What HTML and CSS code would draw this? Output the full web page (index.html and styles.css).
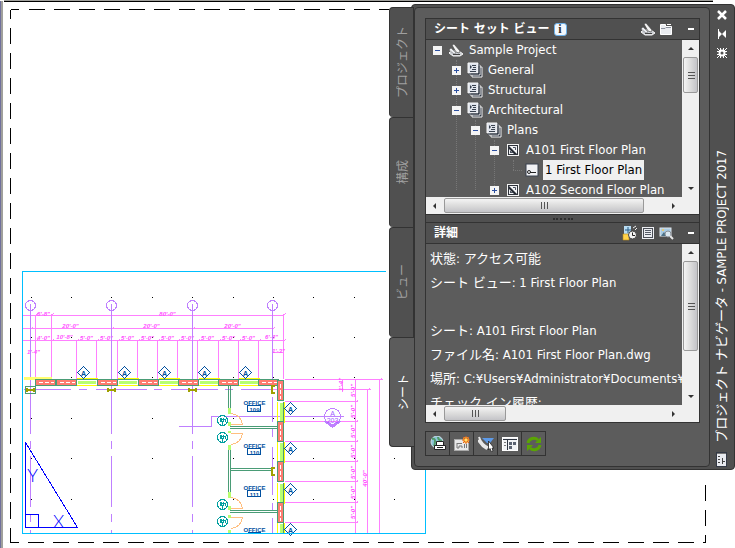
FILE: index.html
```
<!DOCTYPE html>
<html lang="ja">
<head>
    <meta charset="UTF-8">
    <meta name="viewport" content="width=device-width, initial-scale=1.0">
    <title>プロジェクト ナビゲータ - SAMPLE PROJECT 2017</title>
    <link rel="stylesheet" href="styles.css">
</head>
<body>
    <!-- Shared icons -->
    <svg class="icon-defs" aria-hidden="true">
        <symbol id="icon-project" viewBox="0 0 16 16">
            <path d="M3 9 H11 L15 12 L12 14 H5 L1 11 Z" fill="#c9ccd2" stroke="#f5f5f5"/>
            <path d="M4 3 L6 2 L12 9 L11 11 L8 10 Z" fill="#f4f4f4" stroke="#3b3b3b" stroke-width=".6"/>
            <path d="M1 8 L3 6 L8 11 L6 12 Z" fill="#eceef2" stroke="#555" stroke-width=".5"/>
            <path d="M5 12.500 H12" stroke="#444"/>
        </symbol>
        <symbol id="icon-sheets" viewBox="0 0 16 16">
            <path d="M5 5 H15 V15 H5 Z" fill="#2f3644" stroke="#f2f2f2"/>
            <path d="M3 3 H13 V13 H3 Z" fill="#2f3644" stroke="#f2f2f2"/>
            <path d="M1 1 H11 V11 H1 Z" fill="#dfe3ec" stroke="#f8f8f8"/>
            <path d="M1.500 12 H12 V1.500" fill="none" stroke="#2f3644"/>
            <path d="M5 3.500 H9 M6 5.500 H9 M5 7.500 H9 M3 9.500 H9" stroke="#39424f"/>
            <path d="M3 3 L5 5 L3 7 Z" fill="#39424f"/>
        </symbol>
        <symbol id="icon-drawing" viewBox="0 0 16 16">
            <rect x="2.500" y="2.500" width="11" height="11" fill="#f4f5f7" stroke="#f2f2f2"/>
            <rect x="3.500" y="3.500" width="9" height="9" fill="#f4f5f7" stroke="#30343c"/>
            <path d="M4 4 L12 12 H9 L4 7 Z" fill="#252a33"/>
            <path d="M5.500 11 V9 M8 5.500 H10.500 V8 M5 10.500 H8" stroke="#4a515e" fill="none"/>
        </symbol>
        <symbol id="icon-view" viewBox="0 0 16 16">
            <rect x="2" y="2" width="12" height="12" fill="#f0f1f4" stroke="#39414e"/>
            <circle cx="5" cy="10" r="1.500" fill="none" stroke="#222"/>
            <path d="M6 10.500 H12" stroke="#222"/>
        </symbol>
        <symbol id="icon-grip" viewBox="0 0 8 8">
            <path d="M1.500 0 V7 M4.500 0 V7 M7.500 0 V7" stroke="#555"/>
        </symbol>
    </svg>

    <main class="workspace">
        <!-- Floor plan in paper space -->
        <svg class="drawing" viewBox="0 0 735 548" preserveAspectRatio="xMinYMin meet" role="img" aria-label="First Floor Plan">
            <defs>
                <g id="tag">
                    <path d="M0 -6 L6 0 L0 6 L-6 0 Z" fill="#fff"/>
                    <text class="tag-text" y="3">A</text>
                </g>
                <g id="beam">
                    <path d="M-4 -2 V2 M-3 -2 V2 M3 -2 V2 M4 -2 V2 M-3 0 H3 M-3 1 H3"/>
                </g>
                <g id="wall">
                    <rect width="20" height="6" fill="#ff7b70" stroke="#4a9c76"/>
                    <path d="M3 3 H18" stroke="#fff" stroke-dasharray="4 2"/>
                </g>
                <g id="window">
                    <rect x="1" y="1" width="18" height="3" fill="#b8ff70"/>
                    <path d="M0 -1 H21 M0 6 H20" stroke="#ffff00"/>
                    <path d="M0 0 H20" stroke="#4a9c76"/>
                </g>
                <g id="door-tag">
                    <circle r="5" fill="#fff"/>
                    <path d="M-2 -3 V1 M-1 -3 V1 M1 -3 V1 M0 0 V4 M3 -2 V1 M-3 -1 H2"/>
                </g>
            </defs>

            <g transform="translate(.5 .5)">
                <path class="edge-dark" d="M0 0 V548"/>
                <path class="edge" d="M1 0 V548 M2 0 V548 M3 0 H712"/>
                <path class="black" d="M3 1 H712"/>
                <path class="black" d="M10 9 H18 M10 9 V18 M10 542 H18 M10 534 V542"/>
                <path class="black dash" d="M28 9 H388 M27 542 H705"/>
                <path class="black dash" d="M10 27 V534"/>
                <path class="black dash" d="M705 484 V542"/>

                <g class="dots">
                    <path d="M30 297 H360"/>
                    <path d="M30 337 H360"/>
                    <path d="M30 377 H360"/>
                    <path d="M30 418 H360"/>
                    <path d="M30 458 H400"/>
                    <path d="M30 499 H400"/>
                </g>

                <!-- Dimensions -->
                <g class="dim">
                    <path d="M22 315 H283 M22 328 H272 M22 340 H283 M272 352 H283"/>
                    <path d="M35 315 V380 M51 313 V376 M30 328 V390 M283 313 V378"/>
                    <path d="M76 340 V378 M96 340 V378 M117 340 V378 M137 340 V378 M157 340 V378 M177 340 V378 M197 340 V378 M218 340 V378 M238 340 V378 M258 340 V378"/>
                    <path d="M284 379 H382 M272 389 H370 M284 401 H357 M284 421 H357 M284 441 H357 M284 461 H357 M284 481 H357 M284 502 H357 M284 522 H357"/>
                    <path d="M355 378 V533 M367 388 V533 M379 378 V533 M342 378 V391"/>
                    <path class="ticks" d="M34 316 l3 -3 M50 316 l3 -3 M282 316 l3 -3 M29 330 l3 -3 M110 330 l3 -3 M191 330 l3 -3 M271 330 l3 -3 M34 342 l3 -3 M50 342 l3 -3 M75 342 l3 -3 M95 342 l3 -3 M116 342 l3 -3 M136 342 l3 -3 M156 342 l3 -3 M176 342 l3 -3 M196 342 l3 -3 M217 342 l3 -3 M237 342 l3 -3 M257 342 l3 -3 M282 342 l3 -3 M354 403 l3 -3 M354 423 l3 -3 M354 443 l3 -3 M354 463 l3 -3 M354 483 l3 -3 M354 504 l3 -3 M354 524 l3 -3 M366 391 l3 -3 M378 381 l3 -3"/>
                </g>
                <g class="dim-text">
                    <text x="43" y="315">6'-8"</text>
                    <text x="167" y="315">80'-0"</text>
                    <text x="70" y="327">20'-0"</text>
                    <text x="151" y="327">20'-0"</text>
                    <text x="232" y="327">20'-0"</text>
                    <text x="43" y="339">4'-0"</text>
                    <text x="64" y="338">10'-8"</text>
                    <text x="86" y="339">5'-0"</text>
                    <text x="106" y="339">5'-0"</text>
                    <text x="127" y="339">5'-0"</text>
                    <text x="147" y="339">5'-0"</text>
                    <text x="167" y="339">5'-0"</text>
                    <text x="187" y="339">5'-0"</text>
                    <text x="207" y="339">5'-0"</text>
                    <text x="228" y="339">5'-0"</text>
                    <text x="248" y="339">5'-0"</text>
                    <text x="271" y="338">6'-4"</text>
                    <text x="33" y="353">1'-4"</text>
                    <text x="278" y="352">1'-3"</text>
                    <text transform="translate(342 384) rotate(-90)">1'-4"</text>
                    <text transform="translate(354 390) rotate(-90)">5'-0"</text>
                    <text transform="translate(354 411) rotate(-90)">5'-0"</text>
                    <text transform="translate(354 431) rotate(-90)">5'-0"</text>
                    <text transform="translate(354 451) rotate(-90)">5'-0"</text>
                    <text transform="translate(354 472) rotate(-90)">5'-0"</text>
                    <text transform="translate(354 492) rotate(-90)">5'-0"</text>
                    <text transform="translate(354 512) rotate(-90)">5'-0"</text>
                    <text transform="translate(366 478) rotate(-90)">40'-0"</text>
                </g>

                <!-- Column grid -->
                <g class="grid-line">
                    <circle cx="30" cy="305" r="5"/>
                    <circle cx="111" cy="305" r="5"/>
                    <circle cx="192" cy="305" r="5"/>
                    <circle cx="272" cy="305" r="5"/>
                    <path d="M30 303 V433 M111 303 V433 M192 303 V433 M272 303 V390"/>
                    <path d="M30 440 V448 M111 440 V448 M192 440 V448 M30 455 V506 M111 455 V506 M192 455 V506 M30 513 V521 M111 513 V521 M192 513 V521 M30 529 V533 M111 529 V533 M192 529 V533"/>
                    <path d="M272 396 V421 M272 428 V436 M272 446 V494 M272 502 V509 M272 517 V533"/>
                    <path d="M23 389 H70 M78 389 H86 M95 389 H146 M153 389 H161 M170 389 H217 M224 389 H232 M240 389 H272"/>
                    <path d="M178 426 H211 V416 H343"/>
                    <circle cx="332" cy="416" r="8"/>
                    <path class="grid-fill" d="M324 421 L332 427 L340 421 L332 424 Z"/>
                </g>
                <g class="grid-text">
                    <text x="332" y="415">A</text>
                    <text x="332" y="422">203</text>
                </g>

                <!-- North wall -->
                <rect x="23" y="376" width="28" height="3" fill="#ffff70"/>
                <use href="#wall" x="35" y="379"/>
                <use href="#wall" x="56" y="379"/>
                <use href="#window" x="76" y="379"/>
                <use href="#wall" x="97" y="379"/>
                <use href="#window" x="117" y="379"/>
                <use href="#wall" x="138" y="379"/>
                <use href="#window" x="158" y="379"/>
                <use href="#wall" x="178" y="379"/>
                <use href="#window" x="198" y="379"/>
                <use href="#wall" x="218" y="379"/>
                <use href="#window" x="238" y="379"/>
                <use href="#wall" x="258" y="379"/>

                <!-- East wall -->
                <g transform="translate(283 380) rotate(90)">
                    <use href="#wall" x="0"/>
                    <use href="#window" x="21"/>
                    <use href="#wall" x="41"/>
                    <use href="#window" x="61"/>
                    <use href="#wall" x="81"/>
                    <use href="#window" x="102"/>
                    <use href="#wall" x="122"/>
                    <rect x="143" y="1" width="10" height="3" fill="#b8ff70"/>
                    <path d="M142 -1 H153 M142 6 H153" stroke="#ffff00"/>
                    <path d="M142 0 H153" stroke="#4a9c76"/>
                </g>

                <!-- Partitions -->
                <g class="partition">
                    <path d="M228 385 V407 M230 385 V407 M228 449 V491 M230 449 V491"/>
                    <path d="M229 426 H277 M229 428 H277 M230 468 H271 M230 470 H271 M229 510 H277 M229 512 H277 M271 468 V470"/>
                    <rect x="25" y="386" width="10" height="7"/>
                </g>
                <path class="jamb" d="M229 407 V413 M229 421 V425 M229 430 V432 M229 444 V449 M229 491 V497 M229 505 V509 M229 514 V517 M229 529 V533"/>
                <g class="door">
                    <path d="M231 413 C238 414 241 418 242 424 H230"/>
                    <path d="M231 444 C238 443 241 439 242 433 H230"/>
                    <path d="M231 497 C238 498 241 502 242 508 H230"/>
                    <path d="M231 528 C238 527 241 523 242 517 H230"/>
                </g>
                <g class="door-tags">
                    <use href="#door-tag" x="222" y="420"/>
                    <use href="#door-tag" x="222" y="437"/>
                    <use href="#door-tag" x="222" y="504"/>
                    <use href="#door-tag" x="222" y="521"/>
                </g>
                <g class="beams">
                    <use href="#beam" x="30" y="389"/>
                    <use href="#beam" x="111" y="389"/>
                    <use href="#beam" x="192" y="389"/>
                    <use href="#beam" transform="translate(272 389) rotate(90)"/>
                    <use href="#beam" transform="translate(272 471) rotate(90)"/>
                </g>

                <g class="tags">
                    <use href="#tag" x="83" y="372"/>
                    <use href="#tag" x="124" y="372"/>
                    <use href="#tag" x="164" y="372"/>
                    <use href="#tag" x="204" y="372"/>
                    <use href="#tag" x="245" y="372"/>
                    <use href="#tag" x="290" y="408"/>
                    <use href="#tag" x="290" y="448"/>
                    <use href="#tag" x="290" y="489"/>
                    <use href="#tag" x="290" y="529"/>
                </g>
                <g class="room">
                    <text x="254" y="404">OFFICE</text>
                    <rect x="247" y="405" width="13" height="6"/>
                    <text x="254" y="411">109</text>
                    <text x="254" y="447">OFFICE</text>
                    <rect x="247" y="448" width="13" height="6"/>
                    <text x="254" y="454">110</text>
                    <text x="254" y="489">OFFICE</text>
                    <rect x="247" y="490" width="13" height="6"/>
                    <text x="254" y="496">111</text>
                    <text x="254" y="531">OFFICE</text>
                    <path d="M247 532 H260"/>
                </g>

                <!-- Viewport edge and its UCS symbol -->
                <path class="viewport" d="M385 271 H22 V533 H425 V465"/>
                <g class="ucs">
                    <path d="M25 442 V527 H77 Z M25 514 H38 V527"/>
                    <text x="32" y="481">Y</text>
                    <text x="58" y="527">X</text>
                </g>
            </g>
        </svg>

        <section class="palette" aria-label="プロジェクト ナビゲータ">
            <nav class="tabs">
                <button class="tab" type="button"><span>プロジェクト</span></button>
                <button class="tab" type="button"><span>構成</span></button>
                <button class="tab" type="button"><span>ビュー</span></button>
                <button class="tab active" type="button"><span>シート</span></button>
            </nav>

            <div class="window">
                <div class="content">
                    <section class="panel">
                        <header class="panel-header">
                            <h2>シート セット ビュー</h2>
                            <button class="info" type="button" aria-label="情報">i</button>
                            <div class="panel-tools">
                                <button type="button" aria-label="シート セット"><svg class="icon"><use href="#icon-project"/></svg></button>
                                <button type="button" aria-label="フォルダ">
                                    <svg class="icon" viewBox="0 0 16 16"><path d="M2.500 3.500 H7.500 V5.500 H13.500 V13.500 H2.500 Z" fill="#e9ebef" stroke="#fff"/><path d="M3 7.500 H7 L8 6.500 H13" fill="none" stroke="#8a909c"/><path d="M9 3.500 H13" stroke="#fff"/></svg>
                                </button>
                                <button class="minimize" type="button" aria-label="最小化"></button>
                            </div>
                        </header>
                        <div class="scroll-box tree-box">
                            <ul class="tree">
                                <li>
                                    <div class="node"><button class="toggle open" type="button" aria-label="閉じる"></button><svg class="icon"><use href="#icon-project"/></svg><span>Sample Project</span></div>
                                    <ul>
                                        <li><div class="node"><button class="toggle" type="button" aria-label="開く"></button><svg class="icon"><use href="#icon-sheets"/></svg><span>General</span></div></li>
                                        <li><div class="node"><button class="toggle" type="button" aria-label="開く"></button><svg class="icon"><use href="#icon-sheets"/></svg><span>Structural</span></div></li>
                                        <li>
                                            <div class="node"><button class="toggle open" type="button" aria-label="閉じる"></button><svg class="icon"><use href="#icon-sheets"/></svg><span>Architectural</span></div>
                                            <ul>
                                                <li>
                                                    <div class="node"><button class="toggle open" type="button" aria-label="閉じる"></button><svg class="icon"><use href="#icon-sheets"/></svg><span>Plans</span></div>
                                                    <ul>
                                                        <li>
                                                            <div class="node"><button class="toggle open" type="button" aria-label="閉じる"></button><svg class="icon"><use href="#icon-drawing"/></svg><span>A101 First Floor Plan</span></div>
                                                            <ul>
                                                                <li><div class="node"><i class="stub"></i><svg class="icon"><use href="#icon-view"/></svg><span class="selected">1 First Floor Plan</span></div></li>
                                                            </ul>
                                                        </li>
                                                        <li><div class="node"><button class="toggle" type="button" aria-label="開く"></button><svg class="icon"><use href="#icon-drawing"/></svg><span>A102 Second Floor Plan</span></div></li>
                                                    </ul>
                                                </li>
                                            </ul>
                                        </li>
                                    </ul>
                                </li>
                            </ul>
                            <div class="scrollbar vertical">
                                <span class="arrow up"></span>
                                <span class="thumb tree-v"><svg class="grip"><use href="#icon-grip"/></svg></span>
                                <span class="arrow down"></span>
                            </div>
                            <div class="scrollbar horizontal">
                                <span class="arrow left"></span>
                                <span class="thumb tree-h"><svg class="grip"><use href="#icon-grip"/></svg></span>
                                <span class="arrow right"></span>
                            </div>
                        </div>
                    </section>

                    <div class="splitter"></div>

                    <section class="panel">
                        <header class="panel-header">
                            <h2>詳細</h2>
                            <div class="panel-tools">
                                <button type="button" aria-label="状態">
                                    <svg class="icon" viewBox="0 0 16 16"><path d="M2 1 H9 V9 H2 Z" fill="#b8dcf2"/><path d="M3 5 H9 M6 2 V8" stroke="#285c86"/><path d="M1 9 H7 V15 H1 Z" fill="#ffd24a" stroke="#b98b16" stroke-width=".6"/><circle cx="10.500" cy="10" r="4" fill="#f4f4f4" stroke="#444"/><path d="M10.500 7.500 V10.500 H13" fill="none" stroke="#222"/><path d="M11 3 L14 1 M13 5 L15 3" stroke="#eee"/></svg>
                                </button>
                                <button type="button" aria-label="詳細">
                                    <svg class="icon" viewBox="0 0 16 16"><rect x="2.500" y="2.500" width="11" height="11" fill="#4b4f57" stroke="#eceef2"/><rect x="4" y="4" width="8" height="8" fill="#eceef2"/><path d="M5 5.500 H11 M5 7.500 H11 M5 9.500 H11" stroke="#555b66"/></svg>
                                </button>
                                <button type="button" aria-label="プレビュー">
                                    <svg class="icon" viewBox="0 0 16 16"><rect x="2" y="3" width="11" height="8" fill="#a8cbe4" stroke="#dfe6ec"/><path d="M3 11 L6 7 L9 11 Z" fill="#4c7187"/><circle cx="5" cy="5" r="1" fill="#f7c958"/><circle cx="10" cy="9" r="3" fill="#dbe9f2" stroke="#888e96"/><path d="M12 11 L15 14" stroke="#e8e8e8" stroke-width="2"/></svg>
                                </button>
                                <button class="minimize" type="button" aria-label="最小化"></button>
                            </div>
                        </header>
                        <div class="scroll-box details-box">
                            <div class="details">
                                <p>状態: アクセス可能</p>
                                <p>シート ビュー: 1 First Floor Plan</p>
                                <p class="gap">シート: A101 First Floor Plan</p>
                                <p>ファイル名: A101 First Floor Plan.dwg</p>
                                <p>場所: C:¥Users¥Administrator¥Documents¥</p>
                                <p>チェック イン履歴:</p>
                            </div>
                            <div class="scrollbar vertical">
                                <span class="arrow up"></span>
                                <span class="thumb details-v"><svg class="grip"><use href="#icon-grip"/></svg></span>
                                <span class="arrow down"></span>
                            </div>
                            <div class="scrollbar horizontal">
                                <span class="arrow left"></span>
                                <span class="thumb details-h"><svg class="grip"><use href="#icon-grip"/></svg></span>
                                <span class="arrow right"></span>
                            </div>
                        </div>
                    </section>

                    <div class="toolbar">
                        <button type="button" aria-label="パブリッシュ">
                            <svg class="icon" viewBox="0 0 16 16"><circle cx="7" cy="6" r="6" fill="#8cc4d8" stroke="#c8dde4"/><path d="M2 3 Q5 2 5 5 T4 10 M8 1 Q8 4 12 5" fill="none" stroke="#4f9a68" stroke-width="2"/><path d="M6.500 5.500 H13.500 V9.500 H6.500 Z" fill="#fff" stroke="#222"/><path d="M4.500 9.500 H15.500 V13.500 H4.500 Z" fill="#fff" stroke="#222"/><path d="M7 11.500 H13" stroke="#222"/></svg>
                        </button>
                        <button type="button" aria-label="新規シート">
                            <svg class="icon" viewBox="0 0 16 16"><rect x=".5" y="3.500" width="14" height="11" fill="#e9e9ea" stroke="#aaa"/><path d="M3 7.500 H8 M3 7 V12 H5 V10 H8 V12 M10.500 8 V12 M12.500 8 V12" fill="none" stroke="#777"/><circle cx="12" cy="4" r="3" fill="#ffb52e"/><path d="M12 0 V8 M8 4 H16 M9 1 L15 7 M15 1 L9 7" stroke="#e45a1e"/><circle cx="12" cy="4" r="1.500" fill="#ffe26a"/></svg>
                        </button>
                        <button type="button" aria-label="選択">
                            <svg class="icon" viewBox="0 0 16 16"><path d="M4 2 H16 L12 7 H9 Z" fill="#5d9ae8"/><path d="M1 1 Q3 8 11 12 M0 4 Q3 10 9 13" fill="none" stroke="#e8e8e8" stroke-width="2"/><path d="M10.500 5 V14 L12 12.500 L13.500 16 L15 15 L14 12 H16 Z" fill="#fff" stroke="#222" stroke-width=".8"/></svg>
                        </button>
                        <button type="button" aria-label="シート一覧">
                            <svg class="icon" viewBox="0 0 16 16"><rect x=".5" y="1.500" width="15" height="13" fill="#f1f2f4" stroke="#fff"/><path d="M1 3.500 H15" stroke="#2d3440"/><path d="M5.500 4 V14" stroke="#2d3440"/><path d="M2 6.500 H4 M2 9.500 H4" stroke="#777"/><path d="M7 6 H10 V9 H7 Z M11 6 H14 V9 H11 Z M7 10 H10 V13 H7 Z" fill="#5a6270"/></svg>
                        </button>
                        <button type="button" aria-label="更新">
                            <svg class="icon" viewBox="0 0 16 16"><path d="M2 7 C3 2 9 1 12 4 M14 9 C13 14 7 15 4 12" fill="none" stroke="#5aa404" stroke-width="3"/><path d="M15 1 V7 H9 Z M1 15 V9 H7 Z" fill="#5aa404"/></svg>
                        </button>
                    </div>
                </div>

                <aside class="title-bar">
                    <button type="button" aria-label="閉じる">
                        <svg class="small-icon" viewBox="0 0 10 10"><path d="M1 1 L9 9 M9 1 L1 9" stroke="#fff" stroke-width="2.500"/></svg>
                    </button>
                    <button type="button" aria-label="自動的に隠す">
                        <svg class="small-icon" viewBox="0 0 10 10"><path d="M1 0 H2 V10 H1 Z M2 2 L5 5 L2 8 Z M9 1 V9 L5 5 Z" fill="#fff"/></svg>
                    </button>
                    <button type="button" aria-label="プロパティ">
                        <svg class="small-icon" viewBox="0 0 10 10"><circle cx="5" cy="5" r="2.500" fill="none" stroke="#fff" stroke-width="2"/><path d="M3.500 0 V2 M6.500 0 V2 M3.500 8 V10 M6.500 8 V10 M0 3.500 H2 M0 6.500 H2 M8 3.500 H10 M8 6.500 H10 M0 0 L3 3 M7 7 L10 10 M10 0 L7 3 M3 7 L0 10" stroke="#fff"/></svg>
                    </button>
                    <h1>プロジェクト ナビゲータ - SAMPLE PROJECT 2017</h1>
                    <svg class="icon" viewBox="0 0 16 16"><rect x="2.500" y="1.500" width="10" height="14" fill="#e8eaef" stroke="#343a46"/><path d="M3 2.500 H12" stroke="#777"/><path d="M4 5.500 H6 M4 8.500 H6 M4 11.500 H6 M8.500 7 V13 M8 10.500 H11" stroke="#444"/></svg>
                </aside>
            </div>
        </section>
    </main>
</body>
</html>
```

FILE: styles.css
```
/* General Styles */
* {
    box-sizing: border-box;
}

body {
    margin: 0;
    background: #fff;
    color: #fff;
    font-family: "DejaVu Sans Condensed", "Noto Sans", "Noto Sans CJK JP", sans-serif;
    font-size: 13px;
    overflow: hidden;
}

h1, h2, p, ul {
    margin: 0;
    padding: 0;
}

ul {
    list-style: none;
}

button {
    margin: 0;
    padding: 0;
    border: 0;
    background: none;
    color: inherit;
    font: inherit;
}

.icon-defs {
    display: none;
}

.icon {
    display: block;
    flex: none;
    width: 16px;
    height: 16px;
}

.workspace {
    position: relative;
    min-height: 100vh;
}

/* Drawing */
.drawing {
    display: block;
    width: 100%;
    height: auto;
    font-family: "Liberation Sans", sans-serif;
    shape-rendering: crispEdges;
    text-anchor: middle;
}

.drawing path,
.drawing rect,
.drawing circle {
    stroke-width: 1px;
}

.black {
    fill: none;
    stroke: #000;
}

.edge {
    stroke: #a0a09c;
}

.edge-dark {
    stroke: #70709c;
}

.dash {
    stroke-dasharray: 16 9;
}

.dots {
    stroke: #000;
    stroke-dasharray: 1 39.400;
}

.dim {
    fill: none;
    stroke: #ff80ff;
}

.dim-text {
    fill: #ff50ff;
    font-size: 6px;
    font-style: italic;
    font-weight: bold;
}

.grid-line {
    fill: none;
    stroke: #bf80ff;
}

.grid-line .grid-fill {
    fill: #bf80ff;
}

.grid-text {
    fill: #a060ff;
    font-size: 7px;
}

.partition {
    fill: none;
    stroke: #4a9c76;
}

.drawing .jamb {
    stroke: #b8ff70;
    stroke-width: 3px;
}

.door {
    fill: none;
    stroke: #ffbf80;
}

.door-tags {
    stroke: #00a0a0;
}

.beams {
    stroke: #a0a000;
}

.tags {
    stroke: #0050a0;
}

.tag-text {
    fill: #0050a0;
    stroke: none;
    font-size: 7px;
    font-weight: bold;
}

.room {
    fill: #0050a0;
    font-size: 6px;
    font-weight: bold;
}

.room rect,
.room path {
    fill: none;
    stroke: #0050a0;
}

.viewport {
    fill: none;
    stroke: #00bfff;
}

.ucs {
    fill: none;
    stroke: #0000ff;
}

.ucs text {
    fill: #0000ff;
    stroke: none;
    font-family: Lato, "Liberation Sans", sans-serif;
    font-size: 18px;
    font-weight: 300;
}

/* Palette */
.palette {
    position: absolute;
    top: 4px;
    right: 0;
    display: flex;
    align-items: flex-start;
    width: 346px;
}

.tabs {
    position: relative;
    z-index: 1;
    flex: none;
    width: 25px;
    margin: 3px -3px 0 0;
}

.tab {
    display: flex;
    align-items: center;
    justify-content: center;
    width: 100%;
    height: 110px;
    border: 1px solid #333;
    border-bottom: 0;
    border-radius: 4px 0 0 4px;
    background: #505050;
    color: #a0a0a0;
    font-size: 12px;
}

.tab.active {
    border-right: 0;
    border-bottom: 1px solid #333;
    background: #5c5c5c;
    color: #fff;
}

.tab span,
.title-bar h1 {
    writing-mode: vertical-rl;
    text-orientation: sideways;
    transform: rotate(180deg);
    white-space: nowrap;
}

.window {
    display: flex;
    flex: 1;
    min-width: 0;
    padding: 2px 0 2px 2px;
    border: 1px solid #333;
    border-radius: 4px;
    background: #505050;
}

.content {
    flex: 1;
    min-width: 0;
    padding: 10px 9px 10px 10px;
    border: 1px solid #333;
    border-radius: 4px;
    background: #5c5c5c;
}

.panel {
    border: 1px solid #333;
}

.panel-header {
    display: flex;
    align-items: center;
    gap: 4px;
    height: 21px;
    padding: 0 5px 0 8px;
    border-bottom: 1px solid #333;
    background: #505050;
}

.panel-header h2 {
    font-size: 12px;
    line-height: 20px;
    white-space: nowrap;
}

.info {
    width: 13px;
    height: 13px;
    border: 1px solid #6cb0e8;
    border-radius: 3px;
    background: #f2f7fc;
    color: #333;
    font: bold 12px/11px "Liberation Serif", serif;
}

.panel-tools {
    display: flex;
    align-items: center;
    gap: 2px;
    margin-left: auto;
}

.minimize {
    display: flex;
    align-items: center;
    justify-content: flex-end;
    width: 18px;
    height: 16px;
}

.minimize::after {
    content: "";
    width: 6px;
    height: 2px;
    background: #fff;
}

.scroll-box {
    display: grid;
    grid-template-columns: minmax(0, 1fr) 17px;
    grid-template-rows: minmax(0, 1fr) 17px;
    background: #f0f0f0;
}

.tree-box {
    height: 174px;
}

.details-box {
    height: 178px;
}

/* Tree */
.tree {
    overflow: hidden;
    background: #5c5c5c;
    padding-left: 7px;
}

.tree ul {
    position: relative;
    padding-left: 19px;
}

.tree ul::before {
    content: "";
    position: absolute;
    top: 0;
    bottom: 10px;
    left: 23px;
    border-left: 1px dotted #777;
}

.node {
    position: relative;
    display: flex;
    align-items: center;
    height: 20px;
    white-space: nowrap;
}

.node .icon {
    margin: 0 3px 0 6px;
}

.node span {
    padding: 0 2px;
    line-height: 20px;
}

.node .selected {
    background: #f0f0f0;
    color: #000;
}

.toggle {
    flex: none;
    width: 9px;
    height: 9px;
    background:
        linear-gradient(#2c4fa0, #2c4fa0) center / 5px 1px no-repeat,
        linear-gradient(#2c4fa0, #2c4fa0) center / 1px 5px no-repeat,
        #f4f4f4;
}

.toggle.open {
    background:
        linear-gradient(#2c4fa0, #2c4fa0) center / 5px 1px no-repeat,
        #f4f4f4;
}

.stub {
    width: 9px;
    margin-right: -4px;
    margin-left: 4px;
    border-top: 1px dotted #777;
}

/* Scrollbars */
.scrollbar {
    display: flex;
    background: #f0f0f0;
}

.vertical {
    flex-direction: column;
}

.arrow {
    display: flex;
    align-items: center;
    justify-content: center;
    flex: none;
    width: 17px;
    height: 17px;
}

.arrow::after {
    content: "";
    border: 3px solid transparent;
}

.up::after {
    border-top: 0;
    border-bottom-color: #333;
}

.down {
    margin-top: auto;
}

.down::after {
    border-bottom: 0;
    border-top-color: #333;
}

.left::after {
    border-left: 0;
    border-right-color: #333;
}

.right {
    margin-left: auto;
}

.right::after {
    border-right: 0;
    border-left-color: #333;
}

.thumb {
    display: flex;
    align-items: center;
    justify-content: center;
    border: 1px solid #999;
    border-radius: 2px;
    background: linear-gradient(#f4f4f4, #dcdcdc 50%, #c4c4c8);
}

.vertical .thumb {
    margin: 0 1px;
    background: linear-gradient(90deg, #f4f4f4, #dcdcdc 50%, #c4c4c8);
}

.horizontal .thumb {
    margin: 1px;
}

.grip {
    width: 8px;
    height: 8px;
}

.vertical .grip {
    transform: rotate(90deg);
}

.tree-v {
    height: 36px;
}

.tree-h {
    width: 200px;
}

.details-v {
    height: 90px;
}

.details-h {
    width: 62px;
}

.splitter {
    display: flex;
    align-items: center;
    justify-content: center;
    height: 7px;
    border: 1px solid #333;
    border-width: 0 1px;
    background: #505050;
}

.splitter::after {
    content: "";
    width: 20px;
    border-top: 2px dotted #2e2e2e;
}

/* Details */
.details {
    overflow: hidden;
    padding: 3px 0 0 4px;
    background: #5c5c5c;
    line-height: 24px;
    white-space: nowrap;
}

.details p {
    height: 24px;
}

.details .gap {
    margin-top: 24px;
}

/* Toolbar */
.toolbar {
    display: flex;
    margin-top: 8px;
    padding-left: 1px;
}

.toolbar button {
    display: flex;
    align-items: center;
    justify-content: center;
    width: 25px;
    height: 25px;
    margin-left: -1px;
    border: 1px solid #333;
}

/* Title bar */
.title-bar {
    display: flex;
    flex-direction: column;
    align-items: center;
    flex: none;
    width: 24px;
    margin-top: -2px;
}

.title-bar button {
    display: flex;
    align-items: center;
    justify-content: center;
    height: 19px;
}

.small-icon {
    width: 10px;
    height: 10px;
}

.title-bar h1 {
    margin: auto 0 8px;
    font-size: 13px;
    font-weight: normal;
    line-height: 20px;
}
```
